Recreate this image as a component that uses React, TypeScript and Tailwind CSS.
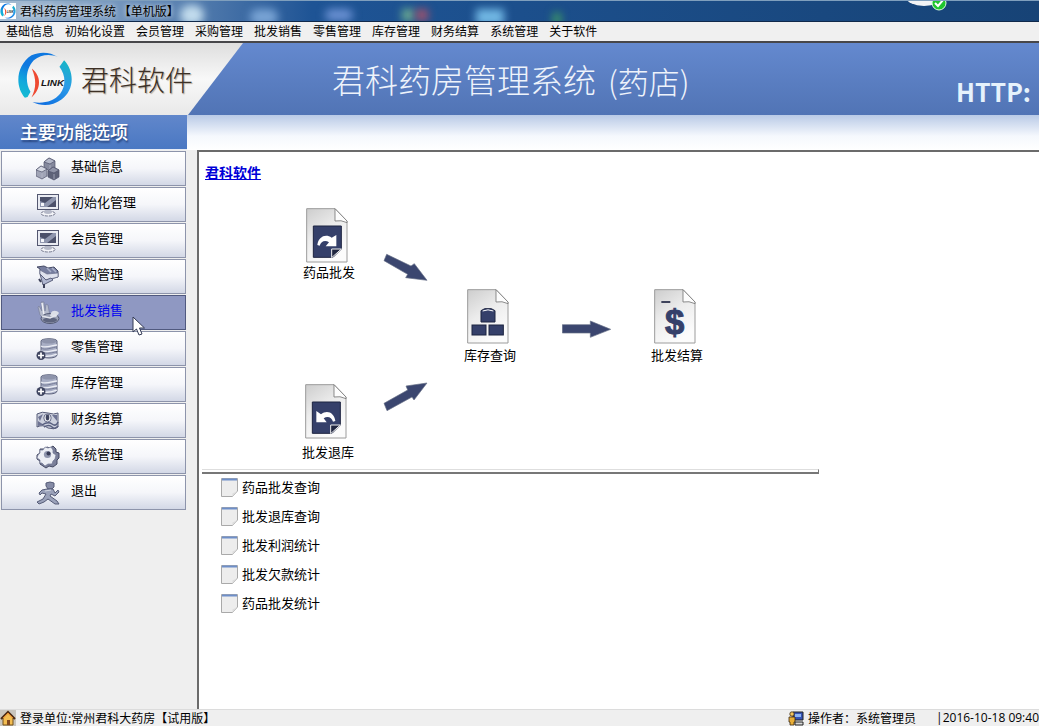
import React from "react";

type IconProps = { className?: string };

const menus = ["基础信息", "初始化设置", "会员管理", "采购管理", "批发销售", "零售管理", "库存管理", "财务结算", "系统管理", "关于软件"];
const reports = ["药品批发查询", "批发退库查询", "批发利润统计", "批发欠款统计", "药品批发统计"];

function BrandMark({ className, id }: IconProps & { id: string }) {
  return (
    <svg viewBox="50 150 170 170" className={className} aria-hidden="true">
      <defs>
        <linearGradient id={id + "l"} x1="0" y1="1" x2="0.4" y2="0">
          <stop offset="0" stopColor="#16c0cf" />
          <stop offset="0.35" stopColor="#12a9dc" />
          <stop offset="0.7" stopColor="#0f78e0" />
        </linearGradient>
        <linearGradient id={id + "r"} x1="0.8" y1="0" x2="0.2" y2="1">
          <stop offset="0" stopColor="#16b5c6" />
          <stop offset="0.4" stopColor="#2b9be8" />
          <stop offset="1" stopColor="#0d6de0" />
        </linearGradient>
      </defs>
      <path d="M74 292C43 257 47 194 94 163C122 150 153 154 173 168C152 158 122 160 101 178C76 204 74 246 91 274L82 290Z" fill={`url(#${id}l)`} />
      <path d="M193 178C226 213 224 270 184 298C157 318 123 318 97 305C130 311 162 303 181 280C199 255 198 224 179 198Z" fill={`url(#${id}r)`} />
      <path d="M95 203C124 225 125 265 94 291C109 262 109 235 95 203Z" fill="#ee4a32" />
      <text x="123" y="257" fontFamily="Liberation Sans, sans-serif" fontSize="30" fontWeight="700" fontStyle="italic" fill="#161616">LINK</text>
    </svg>
  );
}

function CubesIcon({ className }: IconProps) {
  const cubes = [
    { x: 8, y: 0, top: "#b4b8c8", side: "#85899d" },
    { x: 0, y: 8, top: "#d6d9e3", side: "#a0a4b6" },
    { x: 12, y: 9, top: "#9094a8", side: "#5e6278" },
  ];
  return (
    <svg viewBox="0 0 24 24" className={className} aria-hidden="true">
      {cubes.map((c) => (
        <g key={c.x} transform={`translate(${c.x} ${c.y + 1})`} stroke="#50536b" strokeWidth="0.7">
          <path d="M0 4L5 0L11 3V10L6 13L0 10Z" fill={c.side} />
          <path d="M0 4L5 0L11 3L6 6Z" fill={c.top} />
          <path d="M6 7V12" stroke="#b9bccb" />
        </g>
      ))}
    </svg>
  );
}

function MonitorIcon({ className }: IconProps) {
  return (
    <svg viewBox="0 0 24 24" className={className} aria-hidden="true">
      <rect x="1.500" y="1.500" width="21" height="15" fill="#e9ebf2" stroke="#535770" />
      <rect x="4" y="4" width="16" height="10" fill="#4b506a" />
      <path d="M4 14V8L9 10L17 4H20V7L11 14Z" fill="#8f96ae" />
      <path d="M5 10h3v3H5z" fill="#f5f6fa" />
      <ellipse cx="12" cy="20.500" rx="7" ry="2.500" fill="#f3f4f8" stroke="#73778c" strokeDasharray="3 1" />
      <path d="M9 17h6l1 3Q12 22 8 20Z" fill="#b5b9c8" />
    </svg>
  );
}

function CartIcon({ className }: IconProps) {
  return (
    <svg viewBox="0 0 24 24" className={className} aria-hidden="true">
      <path d="M1 2L8 1L12 3L18 2L22 6V12L10 15L4 9V4Z" fill="#777e9f" stroke="#464b66" />
      <path d="M4 5L11 9L22 8V12L10 15L4 9Z" fill="#dfe2ed" stroke="#696f8b" strokeWidth="0.7" />
      <path d="M11 3l4 4M16 3l4 4" stroke="#aab1ca" strokeWidth="1.500" />
      <path d="M4 9L7 20L17 15L15 13L10 15Z" fill="#b0b7d0" stroke="#5b607c" />
      <path d="M3 14l2 3M8 19v4" stroke="#3b3f58" strokeWidth="2" />
    </svg>
  );
}

function HandIcon({ className }: IconProps) {
  return (
    <svg viewBox="0 0 24 24" className={className} aria-hidden="true">
      <path d="M2 6L4 14L8 18L14 15L12 4L10 3L9 10L8 1H5L6 10L3 5Z" fill="#b4bacb" stroke="#79809c" strokeWidth="0.7" />
      <path d="M6 2L8 14" stroke="#eef0f5" strokeWidth="1.500" />
      <ellipse cx="14" cy="17.500" rx="9" ry="5" fill="#9ca2b6" stroke="#525973" />
      <ellipse cx="14" cy="19" rx="7" ry="2.500" fill="#5d647e" />
      <path d="M15 12C16 9 21 9 23 12L20 16L14 15Z" fill="#dcdfe8" />
      <path d="M6 15L14 17L20 14" stroke="#e3e6ed" strokeWidth="1.400" fill="none" />
    </svg>
  );
}

function DatabaseIcon({ className }: IconProps) {
  return (
    <svg viewBox="0 0 24 24" className={className} aria-hidden="true">
      <path d="M5 4C5 1 21 1 21 4V18C21 22 5 22 5 18Z" fill="#a8aec4" stroke="#5d627c" />
      <ellipse cx="13" cy="4.300" rx="7.200" ry="2.300" fill="#8e94ab" />
      <path d="M5 9C9 12 17 8 21 8M5 14C9 17 17 13 21 13M9 19C13 20 18 18 21 17" stroke="#eceef5" strokeWidth="1.300" fill="none" />
      <path d="M5 11C9 14 17 10 21 10M8 16C13 17 18 15 21 15" stroke="#777d98" fill="none" />
      <circle cx="5" cy="18.500" r="4.500" fill="#3f4560" />
      <path d="M5 15.500v6M2 18.500h6" stroke="#fff" strokeWidth="1.700" />
    </svg>
  );
}

function MoneyIcon({ className }: IconProps) {
  return (
    <svg viewBox="0 0 24 24" className={className} aria-hidden="true">
      <path d="M1 5Q6 2 12 4Q18 6 22 4V18Q18 21 12 19Q7 15 1 18Z" fill="#cdd1de" stroke="#575c78" />
      <path d="M2 8L7 5L4 12ZM16 6L21 6V12ZM2 12L8 16L2 17Z" fill="#6d7393" />
      <ellipse cx="11.500" cy="9" rx="3.700" ry="4" fill="#f2f3f7" stroke="#696f8b" />
      <ellipse cx="11.500" cy="8.500" rx="1.800" ry="3" fill="#3f4560" />
      <path d="M6 16Q12 12 16 15T22 13M8 18Q13 15 16 18T22 17" stroke="#596080" strokeWidth="1.500" fill="none" />
    </svg>
  );
}

function GearIcon({ className }: IconProps) {
  return (
    <svg viewBox="0 0 24 24" className={className} aria-hidden="true">
      <path d="M11 2L14 3L17 1L20 4L20 7L23 8V13L21 15L21 19L17 22L13 21L10 23L7 21L4 19L4 16L1 14V10L4 8V4L8 4Z" fill="#7b809a" stroke="#444962" />
      <path d="M9 2L12 3L15 2L17 5L17 8L20 10L19 14L17 16L16 19L12 19L9 21L6 18L4 18L4 15L1 13L2 10L4 8V5L7 5Z" fill="#eceef4" stroke="#737995" strokeWidth="0.7" />
      <circle cx="11.500" cy="9.500" r="3.600" fill="#8f95ad" />
      <circle cx="12.500" cy="8.500" r="2" fill="#373c56" />
    </svg>
  );
}

function RunnerIcon({ className }: IconProps) {
  return (
    <svg viewBox="0 0 24 24" className={className} aria-hidden="true">
      <path d="M10 2Q14 0 18 2V6L16 8H12L10 5Z" fill="#858ba6" stroke="#555b77" />
      <path d="M11 8L17 8L19 12L22 9L23 11L19 15L15 13L14 15L21 20L23 23H19L12 18L8 21L3 23L1 21L7 18L10 13L6 12L4 14L3 12L6 9Z" fill="#9ba2ba" stroke="#555b77" />
      <path d="M9 10L15 9" stroke="#d2d6e2" />
    </svg>
  );
}

const modules: { label: string; Icon: (p: IconProps) => React.ReactElement; active?: boolean }[] = [
  { label: "基础信息", Icon: CubesIcon },
  { label: "初始化管理", Icon: MonitorIcon },
  { label: "会员管理", Icon: MonitorIcon },
  { label: "采购管理", Icon: CartIcon },
  { label: "批发销售", Icon: HandIcon, active: true },
  { label: "零售管理", Icon: DatabaseIcon },
  { label: "库存管理", Icon: DatabaseIcon },
  { label: "财务结算", Icon: MoneyIcon },
  { label: "系统管理", Icon: GearIcon },
  { label: "退出", Icon: RunnerIcon },
];

function DocumentIcon({ id, children }: { id: string; children: React.ReactNode }) {
  return (
    <svg viewBox="-1 -1 126 165" className="h-[55px] w-[42px]" aria-hidden="true">
      <defs>
        <linearGradient id={id} x1="0" y1="0" x2="0.5" y2="1">
          <stop offset="0" stopColor="#cdcdcd" />
          <stop offset="0.5" stopColor="#ececec" />
          <stop offset="1" stopColor="#fcfcfc" />
        </linearGradient>
      </defs>
      <path d="M1 1H86L122 38V161H1Z" fill={`url(#${id})`} stroke="#9c9c9c" strokeWidth="3" />
      <path d="M86 1V38Q104 34 122 43V38Z" fill="#fdfdfd" stroke="#777" strokeWidth="2.500" />
      {children}
    </svg>
  );
}

function PageGlyph() {
  return (
    <>
      <path d="M21 53H105V122L80 147H21Z" fill="#35406a" stroke="#1d2440" strokeWidth="3" />
      <path d="M76 148V122H105Z" fill="#202640" stroke="#f1f1f1" strokeWidth="3" />
    </>
  );
}

function ListDocIcon() {
  return (
    <svg viewBox="0 0 17 20" className="h-5 w-[17px]" aria-hidden="true">
      <path d="M.5 1.500H16.500V14L11.500 19.500H.5Z" fill="#ededed" stroke="#a9a9a9" />
      <path d="M1 2.500H16" stroke="#6e8fc9" strokeWidth="2" />
      <path d="M11.500 19.500V16.500L16.500 14Z" fill="#dcdcdc" />
    </svg>
  );
}

function FlowNode({ label, place, children }: { label: string; place: string; children: React.ReactNode }) {
  return (
    <button type="button" className={"absolute flex flex-col items-start whitespace-nowrap text-[13px] leading-[18px] " + place}>
      <span className="pl-[3px]">{children}</span>
      <span>{label}</span>
    </button>
  );
}

function TitleBar() {
  return (
    <header className="relative flex h-[22px] items-center gap-1 overflow-hidden border-t border-b border-t-[#7f9fbd] border-b-[#10294b] bg-linear-to-r from-[#a9bfd4] via-[#1e5495] via-30% to-[#174376]">
      <span className="absolute top-1 left-[180px] h-5 w-6 rounded-full bg-[#c2dced] blur-xs" />
      <span className="absolute top-2 left-[250px] h-4 w-7 rounded-full bg-[#79a4d5] blur-xs" />
      <span className="absolute top-2 left-[325px] h-3 w-7 rounded-full bg-[#6b91d3] blur-xs" />
      <span className="absolute top-2 left-[402px] h-3 w-3 bg-[#6cad91] blur-xs" />
      <span className="absolute top-2 left-[416px] h-3 w-3 bg-[#a0526c] blur-xs" />
      <span className="absolute top-2 left-[476px] h-4 w-7 bg-[#72b8e5] blur-xs" />
      <span className="absolute top-3 left-[553px] h-3 w-2 bg-[#3f9d63] blur-xs" />
      <span className="relative flex size-4 items-center bg-white">
        <BrandMark id="small" className="size-4" />
      </span>
      <h1 className="relative pb-px text-[12px] leading-4 [text-shadow:0_0_5px_#ffffff]">君科药房管理系统 【单机版】</h1>
      <svg viewBox="0 0 44 12" className="absolute -top-px right-[90px] h-3 w-11" aria-hidden="true">
        <ellipse cx="19" cy="-3" rx="18" ry="9" fill="#f2f3f5" />
        <circle cx="34" cy="3" r="7" fill="#1fc62e" stroke="#d8ffdb" />
        <path d="M30 3L33 6L38 0" fill="none" stroke="#fff" strokeWidth="2" />
      </svg>
    </header>
  );
}

export default function App() {
  return (
    <div className="flex h-screen flex-col overflow-hidden bg-[#efefef] font-['Noto_Sans_CJK_SC',sans-serif] text-black">
      <TitleBar />

      <nav aria-label="主菜单" className="flex h-[21px] items-center gap-[11px] border-b-2 border-[#47474a] bg-[#f0f0f0] pb-px pl-1.5 text-[12px] leading-4">
        {menus.map((m) => (
          <button type="button" key={m} className="whitespace-nowrap">{m}</button>
        ))}
      </nav>

      <section className="flex h-18 shrink-0 items-stretch bg-linear-to-b from-[#6489cf] to-[#5174b5]">
        <div className="flex w-[243px] shrink-0 items-center gap-2 bg-linear-to-b from-[#dedede] via-[#f8f8f8] via-50% to-[#e9e9e9] pl-[17px] [clip-path:polygon(0_0,100%_0,188px_100%,0_100%)]">
          <BrandMark id="brand" className="size-14" />
          <span className="text-[28px] leading-10 font-light whitespace-nowrap text-[#3d3127] [text-shadow:1px_1px_1px_#b3a89b]">君科软件</span>
        </div>
        <div className="flex min-w-0 flex-1 items-center justify-between pr-2 pl-[89px]">
          <h2 className="flex items-center gap-3 text-[33px] leading-10 font-light whitespace-nowrap text-[#eef3fb]">
            君科药房管理系统
            <span className="pt-1 text-[31px]">(药店)</span>
          </h2>
          <span className="pt-6 text-[25px] leading-8 font-bold text-[#e6f2fc]">HTTP:</span>
        </div>
      </section>

      <div className="flex h-[35px] shrink-0">
        <h2 className="w-[187px] border-b border-[#e8ecf5] bg-linear-to-b from-[#6187cb] to-[#4a78c3] pl-5 text-[18px] leading-8 font-medium text-white [text-shadow:1px_2px_2px_#27457f]">
          主要功能选项
        </h2>
        <div className="flex-1 bg-linear-to-b from-[#b9cae6] via-[#f5f8fd] via-60% to-white" />
      </div>

      <div className="flex min-h-0 flex-1">
        <nav aria-label="主要功能选项" className="flex w-[197px] shrink-0 flex-col gap-px pt-px pr-[11px] pl-px">
          {modules.map(({ label, Icon, active }) => (
            <button
              type="button"
              key={label}
              className={
                "relative flex h-[35px] items-center gap-[11px] border pl-[34px] text-[13px] leading-5 " +
                (active ? "border-[#50597f] bg-[#8f98c2] text-[#0000f0]" : "border-[#8d94ab] bg-linear-to-b from-white via-[#f5f6fa] to-[#d3d8e6]")
              }
            >
              <Icon className="size-6" />
              <span className="pb-1.5">{label}</span>
              {active && (
                <svg viewBox="0 0 14 20" className="absolute top-5 left-[130px] z-10 h-5 w-3.5" aria-hidden="true">
                  <path d="M1 1V16L4.500 13L7 19L10 18L7.500 12H12.500Z" fill="#fff" stroke="#333a55" />
                </svg>
              )}
            </button>
          ))}
        </nav>

        <main className="min-w-0 flex-1 border-t-2 border-l-2 border-[#6b6b6b] bg-white">
          <div className="relative h-[317px]">
            <a href="#home" className="absolute top-2.5 left-1.5 text-[14px] leading-5 font-bold text-[#0000d8] underline">君科软件</a>

            <FlowNode label="药品批发" place="top-14 left-[104px]">
              <DocumentIcon id="doc-sale">
                <PageGlyph />
                <path d="M33 110C36 85 58 75 76 88L90 80V114H58L68 102C57 94 44 98 40 112Z" fill="#fff" />
              </DocumentIcon>
            </FlowNode>
            <FlowNode label="库存查询" place="top-[137px] left-[265px] gap-0.5">
              <DocumentIcon id="doc-stock">
                <g fill="#35406a" stroke="#1d2440" strokeWidth="3">
                  <path d="M41 64L52 58H72L83 64V98H41Z" />
                  <rect x="14" y="107" width="42" height="30" />
                  <rect x="65" y="107" width="43" height="30" />
                </g>
                <path d="M46 65Q62 58 78 65" stroke="#fff" strokeWidth="3" fill="none" />
              </DocumentIcon>
            </FlowNode>
            <FlowNode label="批发结算" place="top-[137px] left-[452px] gap-0.5">
              <DocumentIcon id="doc-pay">
                <path d="M21 38H48" stroke="#1d2440" strokeWidth="5" />
                <text x="61" y="134" textAnchor="middle" fontFamily="Liberation Sans, sans-serif" fontWeight="700" fontSize="104" fill="#35406a" stroke="#35406a" strokeWidth="3">$</text>
              </DocumentIcon>
            </FlowNode>
            <FlowNode label="批发退库" place="top-58 left-[103px] gap-1">
              <DocumentIcon id="doc-return">
                <PageGlyph />
                <path d="M90 110C87 85 65 75 47 90L33 80V114H64L55 102C66 94 79 98 83 112Z" fill="#fff" />
              </DocumentIcon>
            </FlowNode>

            <svg viewBox="279 174 135 84" className="absolute top-[101px] left-46 h-7 w-[45px]" aria-hidden="true">
              <path d="M290 178L363 213L373 206L411 256L347 248L353 238L282 197Z" fill="#3b466f" stroke="#667087" strokeWidth="2" />
            </svg>
            <svg viewBox="66 150 150 54" className="absolute top-42 left-[363px] h-[18px] w-[50px]" aria-hidden="true">
              <path d="M67 164H151V153L212 178L151 202V189H67Z" fill="#3b466f" stroke="#667087" strokeWidth="2" />
            </svg>
            <svg viewBox="279 36 135 90" className="absolute top-[230px] left-46 h-[30px] w-[45px]" aria-hidden="true">
              <path d="M282 100L353 60L348 48L411 39L372 90L366 81L291 122Z" fill="#3b466f" stroke="#667087" strokeWidth="2" />
            </svg>
          </div>

          <hr className="ml-[3px] h-[5px] w-[617px] max-w-full border-t border-r border-b-2 border-t-[#dedede] border-r-[#777777] border-b-[#777777]" />

          <ul className="flex flex-col gap-[9px] pt-[3px] pl-[22px]">
            {reports.map((r) => (
              <li key={r} className="flex">
                <button type="button" className="flex items-center gap-1 text-[13px] leading-5">
                  <ListDocIcon />
                  <span>{r}</span>
                </button>
              </li>
            ))}
          </ul>
        </main>
      </div>

      <footer className="flex h-[17px] shrink-0 items-center border-t border-[#dcdcdc] text-[12px] leading-4 whitespace-nowrap">
        <svg viewBox="0 0 16 16" className="mr-1 size-4" aria-hidden="true">
          <rect width="16" height="16" fill="#c9c5bd" />
          <path d="M3 8V15H13V8L8 3Z" fill="#f3bd52" stroke="#73501b" />
          <path d="M1 9L8 2L15 9" fill="none" stroke="#4c2b12" strokeWidth="2" />
          <path d="M3 8L8 3L13 8" fill="none" stroke="#e8892c" />
          <path d="M7 10h3v5H7z" fill="#83491e" />
        </svg>
        <span className="flex-1">登录单位:常州君科大药房【试用版】</span>
        <svg viewBox="0 0 16 15" className="mr-1 h-[15px] w-4" aria-hidden="true">
          <path d="M5 1H15V9H5Z" fill="#3452b5" stroke="#222" />
          <path d="M7 3H13V6H7Z" fill="#8eb4ef" />
          <path d="M7 11H15V14H7Z" fill="#d8d8d8" stroke="#222" />
          <circle cx="4" cy="3" r="2.200" fill="#f4c55e" stroke="#3b2a12" strokeWidth=".8" />
          <path d="M1 6H7V11H6V14H2V11H1Z" fill="#e9ae36" stroke="#3b2a12" strokeWidth=".8" />
        </svg>
        <span className="w-[128px]">操作者：系统管理员</span>
        <span className="font-['Open_Sans',sans-serif]">|2016-10-18 09:40</span>
      </footer>
    </div>
  );
}
